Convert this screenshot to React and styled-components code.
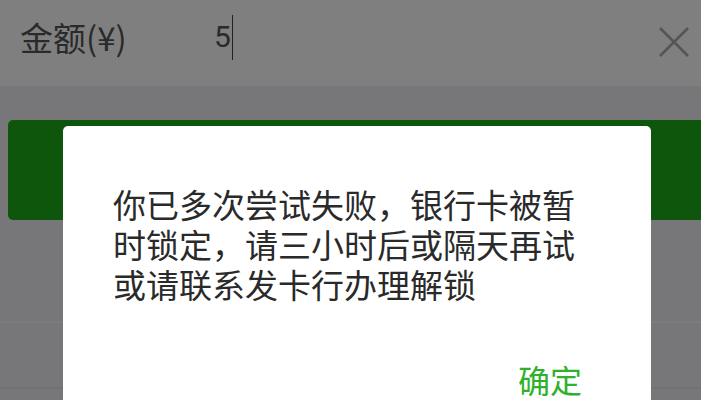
import styled, { createGlobalStyle } from 'styled-components';

const GlobalStyle = createGlobalStyle`
  html, body {
    margin: 0;
    padding: 0;
    background: #efeff4;
    font-family: "Noto Sans CJK SC", "Noto Sans", sans-serif;
    overflow: hidden;
  }
`;

const Page = styled.div`
  display: flex;
  flex-direction: column;
  width: 701px;
  height: 400px;
  background: #efeff4;
`;

const InputRow = styled.div`
  display: flex;
  align-items: center;
  height: 86px;
  padding: 0 11px 12px 20px;
  box-sizing: border-box;
  background: #fff;
`;

const Label = styled.span`
  width: 194px;
  font-size: 33px;
  line-height: 40px;
  color: #555;
`;

const Amount = styled.span`
  display: flex;
  align-items: center;
  flex: 1;
  font-family: Roboto, "Liberation Sans", sans-serif;
  font-size: 30px;
  line-height: 40px;
  color: #555;
`;

const Caret = styled.span`
  display: inline-block;
  width: 1px;
  height: 45px;
  margin-left: 1px;
  background: #444;
`;

const ClearIcon = styled.svg`
  width: 32px;
  height: 32px;
  margin-top: 10px;
`;

const Gap = styled.div`
  height: 34px;
`;

const PayButton = styled.div`
  height: 100px;
  margin: 0 -8px 0 8px;
  border-radius: 5px;
  background: #1aad19;
`;

const Section = styled.div`
  height: ${(p) => p.$h}px;
  border-bottom: ${(p) => (p.$line ? `2px solid ${p.$line}` : 'none')};
`;

const Mask = styled.div`
  position: fixed;
  inset: 0;
  background: rgba(0, 0, 0, 0.5);
`;

const Dialog = styled.div`
  position: fixed;
  left: 63px;
  top: 126px;
  width: 588px;
  height: 320px;
  border-radius: 5px;
  background: #fff;
  display: flex;
  flex-direction: column;
`;

const Message = styled.div`
  padding: 58px 50px 0 50px;
  font-size: 33px;
  line-height: 40px;
  color: #2a2a2a;
`;

const Footer = styled.div`
  display: flex;
  justify-content: flex-end;
  padding: 55px 69px 0 0;
`;

const ConfirmButton = styled.span`
  font-size: 32px;
  line-height: 40px;
  color: #2fb12b;
`;

export default function App() {
  return (
    <>
      <GlobalStyle />
      <Page>
        <InputRow>
          <Label>金额(¥)</Label>
          <Amount>
            5<Caret />
          </Amount>
          <ClearIcon viewBox="0 0 32 32">
            <path d="M2 2 L30 30 M30 2 L2 30" stroke="#aaa" strokeWidth="2.6" fill="none" />
          </ClearIcon>
        </InputRow>
        <Gap />
        <PayButton />
        <Section $h={101} $line="#f6f6f6" />
        <Section $h={64} $line="#e2e2e2" />
      </Page>
      <Mask />
      <Dialog>
        <Message>你已多次尝试失败，银行卡被暂时锁定，请三小时后或隔天再试或请联系发卡行办理解锁</Message>
        <Footer>
          <ConfirmButton>确定</ConfirmButton>
        </Footer>
      </Dialog>
    </>
  );
}
